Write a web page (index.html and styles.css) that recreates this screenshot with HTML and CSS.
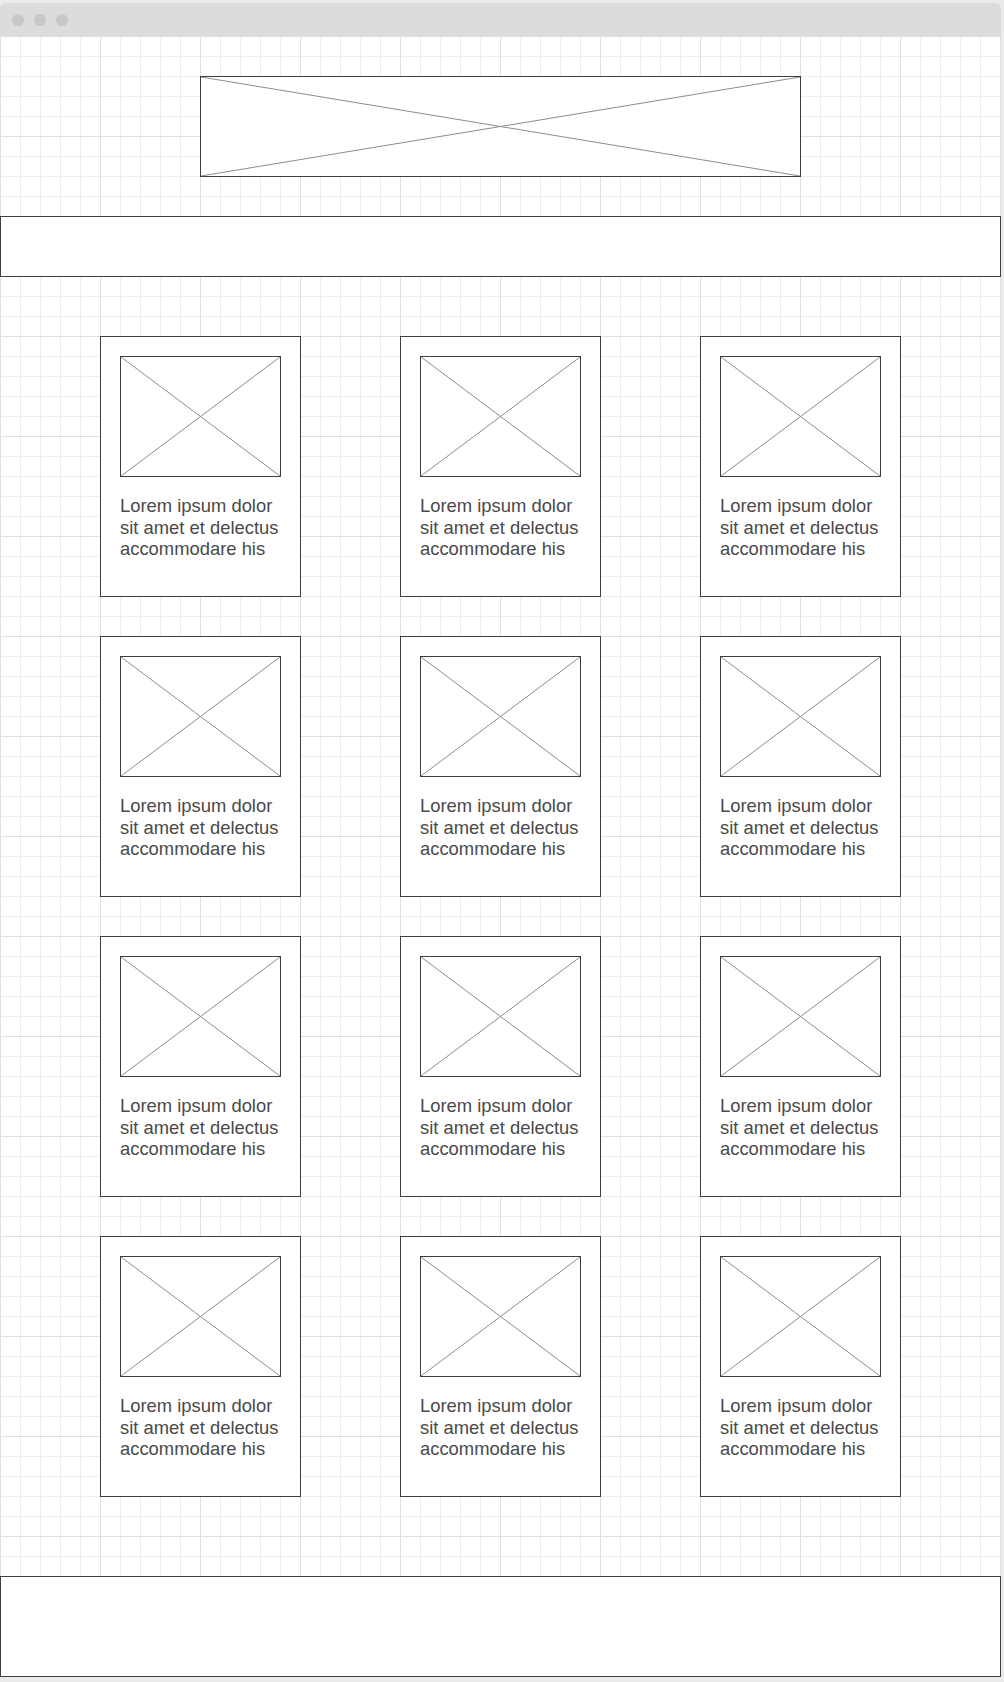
FILE: index.html
```html
<!DOCTYPE html>
<html>
<head>
<meta charset="utf-8">
<link rel="stylesheet" href="styles.css">
</head>
<body>
<div class="window">
  <div class="titlebar">
    <span class="dot"></span><span class="dot"></span><span class="dot"></span>
  </div>
  <div class="content">
    <div class="logo">
      <svg class="x" viewBox="0 0 100 100" preserveAspectRatio="none"><line x1="0" y1="0" x2="100" y2="100"/><line x1="0" y1="100" x2="100" y2="0"/></svg>
    </div>
    <div class="nav"></div>
    <div class="cards">
      <div class="card"><div class="ph"><svg class="x" viewBox="0 0 100 100" preserveAspectRatio="none"><line x1="0" y1="0" x2="100" y2="100"/><line x1="0" y1="100" x2="100" y2="0"/></svg></div><p>Lorem ipsum dolor sit amet et delectus accommodare his</p></div>
      <div class="card"><div class="ph"><svg class="x" viewBox="0 0 100 100" preserveAspectRatio="none"><line x1="0" y1="0" x2="100" y2="100"/><line x1="0" y1="100" x2="100" y2="0"/></svg></div><p>Lorem ipsum dolor sit amet et delectus accommodare his</p></div>
      <div class="card"><div class="ph"><svg class="x" viewBox="0 0 100 100" preserveAspectRatio="none"><line x1="0" y1="0" x2="100" y2="100"/><line x1="0" y1="100" x2="100" y2="0"/></svg></div><p>Lorem ipsum dolor sit amet et delectus accommodare his</p></div>
      <div class="card"><div class="ph"><svg class="x" viewBox="0 0 100 100" preserveAspectRatio="none"><line x1="0" y1="0" x2="100" y2="100"/><line x1="0" y1="100" x2="100" y2="0"/></svg></div><p>Lorem ipsum dolor sit amet et delectus accommodare his</p></div>
      <div class="card"><div class="ph"><svg class="x" viewBox="0 0 100 100" preserveAspectRatio="none"><line x1="0" y1="0" x2="100" y2="100"/><line x1="0" y1="100" x2="100" y2="0"/></svg></div><p>Lorem ipsum dolor sit amet et delectus accommodare his</p></div>
      <div class="card"><div class="ph"><svg class="x" viewBox="0 0 100 100" preserveAspectRatio="none"><line x1="0" y1="0" x2="100" y2="100"/><line x1="0" y1="100" x2="100" y2="0"/></svg></div><p>Lorem ipsum dolor sit amet et delectus accommodare his</p></div>
      <div class="card"><div class="ph"><svg class="x" viewBox="0 0 100 100" preserveAspectRatio="none"><line x1="0" y1="0" x2="100" y2="100"/><line x1="0" y1="100" x2="100" y2="0"/></svg></div><p>Lorem ipsum dolor sit amet et delectus accommodare his</p></div>
      <div class="card"><div class="ph"><svg class="x" viewBox="0 0 100 100" preserveAspectRatio="none"><line x1="0" y1="0" x2="100" y2="100"/><line x1="0" y1="100" x2="100" y2="0"/></svg></div><p>Lorem ipsum dolor sit amet et delectus accommodare his</p></div>
      <div class="card"><div class="ph"><svg class="x" viewBox="0 0 100 100" preserveAspectRatio="none"><line x1="0" y1="0" x2="100" y2="100"/><line x1="0" y1="100" x2="100" y2="0"/></svg></div><p>Lorem ipsum dolor sit amet et delectus accommodare his</p></div>
      <div class="card"><div class="ph"><svg class="x" viewBox="0 0 100 100" preserveAspectRatio="none"><line x1="0" y1="0" x2="100" y2="100"/><line x1="0" y1="100" x2="100" y2="0"/></svg></div><p>Lorem ipsum dolor sit amet et delectus accommodare his</p></div>
      <div class="card"><div class="ph"><svg class="x" viewBox="0 0 100 100" preserveAspectRatio="none"><line x1="0" y1="0" x2="100" y2="100"/><line x1="0" y1="100" x2="100" y2="0"/></svg></div><p>Lorem ipsum dolor sit amet et delectus accommodare his</p></div>
      <div class="card"><div class="ph"><svg class="x" viewBox="0 0 100 100" preserveAspectRatio="none"><line x1="0" y1="0" x2="100" y2="100"/><line x1="0" y1="100" x2="100" y2="0"/></svg></div><p>Lorem ipsum dolor sit amet et delectus accommodare his</p></div>
    </div>
    <div class="footer"></div>
  </div>
</div>
</body>
</html>
```
FILE: styles.css
```css
html, body {
  margin: 0;
  padding: 0;
  background: #ebebeb;
}
body {
  font-family: "Liberation Sans", Arial, sans-serif;
  min-height: 1682px;
}
.window {
  margin-top: 3px;
  width: 1001px;
  border-radius: 6px 6px 0 0;
  overflow: hidden;
}
.titlebar {
  height: 33px;
  background: #dcdcdc;
  display: flex;
  align-items: center;
  gap: 10px;
  padding-left: 12px;
  box-sizing: border-box;
}
.dot {
  width: 12px;
  height: 12px;
  border-radius: 50%;
  background: #c7c7c7;
}
.content {
  background-color: #fff;
  background-image:
    linear-gradient(to right, #e0e0e0 1px, transparent 1px),
    linear-gradient(to bottom, #e0e0e0 1px, transparent 1px),
    linear-gradient(to right, #ededed 1px, transparent 1px),
    linear-gradient(to bottom, #ededed 1px, transparent 1px);
  background-size: 100px 100px, 100px 100px, 20px 20px, 20px 20px;
  padding-top: 40px;
  display: flex;
  flex-direction: column;
}
.x {
  display: block;
  width: 100%;
  height: 100%;
}
.x line {
  stroke: #8c8c8c;
  stroke-width: 1;
  vector-effect: non-scaling-stroke;
}
.logo {
  box-sizing: border-box;
  width: 601px;
  height: 101px;
  margin-left: 200px;
  border: 1px solid #3f3f3f;
  background: #fff;
}
.nav {
  box-sizing: border-box;
  width: 1001px;
  height: 61px;
  margin-top: 39px;
  border: 1px solid #3f3f3f;
  background: #fff;
}
.cards {
  display: grid;
  grid-template-columns: repeat(3, 201px);
  column-gap: 99px;
  row-gap: 39px;
  padding-left: 100px;
  margin-top: 59px;
}
.card {
  box-sizing: border-box;
  height: 261px;
  border: 1px solid #3f3f3f;
  background: #fff;
  padding: 19px;
}
.ph {
  box-sizing: border-box;
  width: 161px;
  height: 121px;
  border: 1px solid #3f3f3f;
}
.card p {
  margin: 18px 0 0 0;
  font-size: 18.4px;
  line-height: 21.5px;
  color: #4a4a4a;
}
.footer {
  box-sizing: border-box;
  width: 1001px;
  height: 101px;
  margin-top: 79px;
  border: 1px solid #3f3f3f;
  background: #fff;
}
```
